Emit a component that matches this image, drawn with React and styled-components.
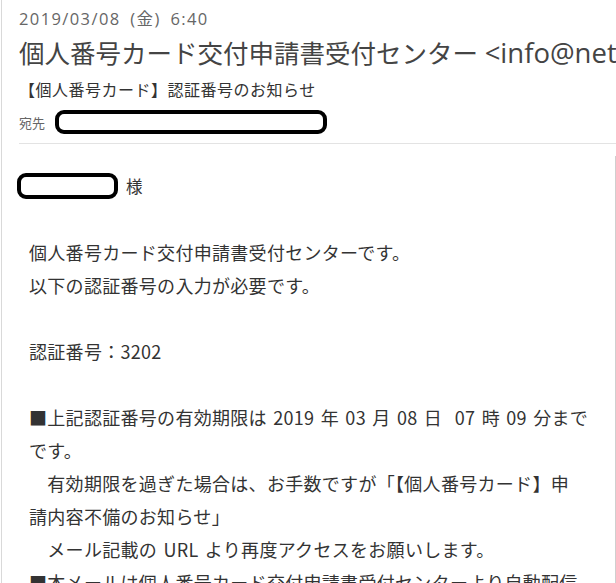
import React from "react";
import styled, { createGlobalStyle } from "styled-components";

const GlobalStyle = createGlobalStyle`
  html, body {
    margin: 0;
    padding: 0;
    background: #ffffff;
    overflow: hidden;
  }
  body {
    font-family: "Open Sans", "Noto Sans CJK JP", sans-serif;
  }
`;

const Frame = styled.div`
  margin-left: 1px;
  height: 583px;
  border-left: 1px solid #d9d9d9;
  overflow: hidden;
`;

const Header = styled.header`
  padding: 9px 0 0 17px;
  white-space: nowrap;
  overflow: hidden;
`;

const DateLine = styled.div`
  font-size: 16.5px;
  line-height: 20px;
  letter-spacing: 1.4px;
  word-spacing: 4px;
  color: #666;
`;

const Sender = styled.div`
  margin-top: 6px;
  font-size: 25.5px;
  line-height: 36px;
  color: #444;
`;

const Address = styled.span`
  font-size: 27.5px;
`;

const Subject = styled.div`
  margin-top: 7px;
  font-family: "Noto Sans CJK JP", sans-serif;
  font-size: 16px;
  line-height: 22px;
  letter-spacing: 0.5px;
  color: #333;
`;

const ToRow = styled.div`
  margin-top: 10px;
  display: flex;
  align-items: center;
  gap: 10px;
  height: 24px;
`;

const ToLabel = styled.span`
  font-family: "Noto Sans CJK JP", sans-serif;
  font-size: 13px;
  color: #666;
`;

// hand drawn black box used to hide a name
const Redaction = styled.span`
  display: inline-block;
  box-sizing: border-box;
  width: ${(p) => p.$w}px;
  height: ${(p) => p.$h}px;
  border: 4px solid #000;
  border-radius: 9px;
`;

const Divider = styled.hr`
  margin: 9px 0 0 17px;
  border: 0;
  border-top: 1px solid #e3e3e3;
  height: 0;
`;

const MailBody = styled.div`
  margin-top: 12px;
  padding-top: 17px;
  border-right: 1px solid #cfcfcf;
  height: 600px;
  font-family: "Noto Sans CJK JP", sans-serif;
  color: #333;
`;

const Greeting = styled.div`
  padding-left: 15px;
  display: flex;
  align-items: center;
  gap: 8px;
  font-size: 16.5px;
`;

const Message = styled.div`
  margin-top: 37px;
  padding-left: 27px;
  font-size: 18px;
  line-height: 33px;
  letter-spacing: 0.3px;
  word-spacing: 2px;
  white-space: pre;
`;

const Line = styled.div`
  height: 33px;
`;

const lines = [
  "個人番号カード交付申請書受付センターです。",
  "以下の認証番号の入力が必要です。",
  "",
  "認証番号：3202",
  "",
  "■上記認証番号の有効期限は 2019 年 03 月 08 日  07 時 09 分まで",
  "です。",
  "　有効期限を過ぎた場合は、お手数ですが「【個人番号カード】申",
  "請内容不備のお知らせ」",
  "　メール記載の URL より再度アクセスをお願いします。",
  "■本メールは個人番号カード交付申請書受付センターより自動配信",
  "されています。",
];

export default function App() {
  return (
    <>
      <GlobalStyle />
      <Frame>
        <Header>
          <DateLine>2019/03/08 (金) 6:40</DateLine>
          <Sender>
            個人番号カード交付申請書受付センター <Address>&lt;info@net.kojinbango-card.go.jp&gt;</Address>
          </Sender>
          <Subject>【個人番号カード】認証番号のお知らせ</Subject>
          <ToRow>
            <ToLabel>宛先</ToLabel>
            <Redaction $w={272} $h={24} />
          </ToRow>
        </Header>
        <Divider />
        <MailBody>
          <Greeting>
            <Redaction $w={101} $h={26} />
            <span>様</span>
          </Greeting>
          <Message>
            {lines.map((l, i) => (
              <Line key={i}>{l}</Line>
            ))}
          </Message>
        </MailBody>
      </Frame>
    </>
  );
}
